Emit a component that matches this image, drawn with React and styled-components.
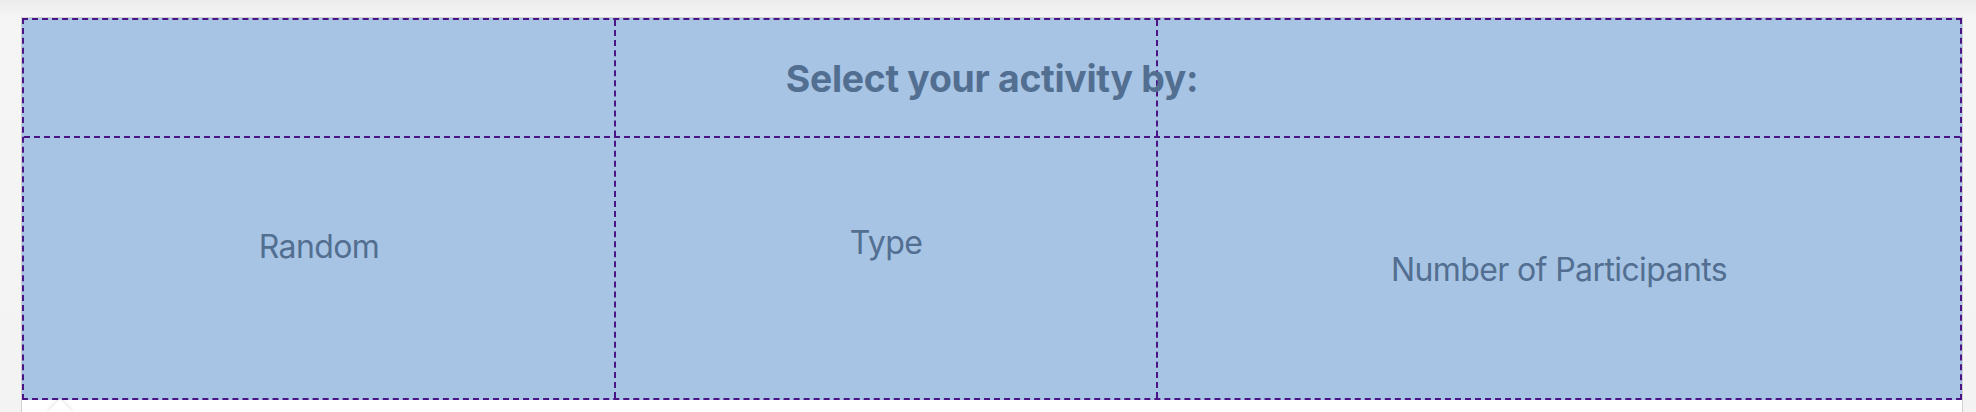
import React from "react";
import styled, { createGlobalStyle } from "styled-components";

const Global = createGlobalStyle`
  html, body {
    margin: 0;
    padding: 0;
  }
  body {
    background: linear-gradient(#ececec 0px, #f5f5f5 17px, #f3f3f3 100%);
    font-family: Inter, "Noto Sans", sans-serif;
    height: 412px;
    overflow: hidden;
  }
`;

const Page = styled.div`
  padding: 17px 13px 0 21px;
  height: 412px;
  box-sizing: border-box;
`;

const Frame = styled.div`
  position: relative;
  height: 100%;
  box-sizing: border-box;
  border: 1px solid #d2d2d2;
  border-bottom: none;
  background: #ffffff;
`;

const Panel = styled.section`
  display: grid;
  grid-template-columns: 592px 542px 1fr;
  grid-template-rows: 118px 260px;
  border: 2px dashed #4b1486;
  background: #a8c4e4;
  color: #526f91;
`;

const Heading = styled.h3`
  grid-column: 1 / -1;
  grid-row: 1;
  margin: 0;
  padding-top: 36px;
  box-sizing: border-box;
  border-bottom: 2px dashed #4b1486;
  font-size: 37.4px;
  line-height: 45px;
  font-weight: 700;
  text-align: center;
  letter-spacing: -0.3px;
  position: relative;
`;

const Column = styled.div`
  grid-row: 1 / 3;
  grid-column: ${(p) => p.$col};
  border-right: ${(p) => (p.$last ? "none" : "2px dashed #4b1486")};
  padding-top: ${(p) => p.$padTop}px;
  box-sizing: border-box;
  text-align: center;
  font-size: 32px;
  line-height: 40px;
  letter-spacing: -0.6px;
  font-weight: 400;
`;

const Pointer = styled.div`
  position: absolute;
  left: 25px;
  top: 381px;
  width: 0;
  height: 0;
  border-left: 13px solid transparent;
  border-right: 13px solid transparent;
  border-bottom: 14px solid #ffffff;
  filter: drop-shadow(0 -1px 2px rgba(0, 0, 0, 0.12));
`;

export default function App() {
  return (
    <>
      <Global />
      <Page>
        <Frame>
          <Panel>
            <Column $col={1} $padTop={207}>Random</Column>
            <Column $col={2} $padTop={203}>Type</Column>
            <Column $col={3} $padTop={230} $last>Number of Participants</Column>
            <Heading>Select your activity by:</Heading>
          </Panel>
          <Pointer />
        </Frame>
      </Page>
    </>
  );
}
